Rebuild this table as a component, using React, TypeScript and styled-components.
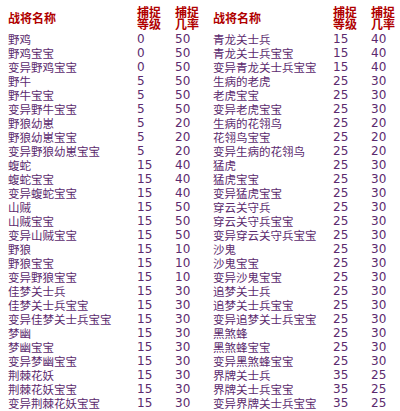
import styled, { createGlobalStyle } from "styled-components";

const GlobalStyle = createGlobalStyle`
  html, body {
    margin: 0;
    padding: 0;
    background: #ffffff;
  }
`;

type Row = [string, number, number];

const leftRows: Row[] = [
  ["野鸡", 0, 50],
  ["野鸡宝宝", 0, 50],
  ["变异野鸡宝宝", 0, 50],
  ["野牛", 5, 50],
  ["野牛宝宝", 5, 50],
  ["变异野牛宝宝", 5, 50],
  ["野狼幼崽", 5, 20],
  ["野狼幼崽宝宝", 5, 20],
  ["变异野狼幼崽宝宝", 5, 20],
  ["蝮蛇", 15, 40],
  ["蝮蛇宝宝", 15, 40],
  ["变异蝮蛇宝宝", 15, 40],
  ["山贼", 15, 50],
  ["山贼宝宝", 15, 50],
  ["变异山贼宝宝", 15, 50],
  ["野狼", 15, 10],
  ["野狼宝宝", 15, 10],
  ["变异野狼宝宝", 15, 10],
  ["佳梦关士兵", 15, 30],
  ["佳梦关士兵宝宝", 15, 30],
  ["变异佳梦关士兵宝宝", 15, 30],
  ["梦幽", 15, 30],
  ["梦幽宝宝", 15, 30],
  ["变异梦幽宝宝", 15, 30],
  ["荆棘花妖", 15, 30],
  ["荆棘花妖宝宝", 15, 30],
  ["变异荆棘花妖宝宝", 15, 30],
];

const rightRows: Row[] = [
  ["青龙关士兵", 15, 40],
  ["青龙关士兵宝宝", 15, 40],
  ["变异青龙关士兵宝宝", 15, 40],
  ["生病的老虎", 25, 30],
  ["老虎宝宝", 25, 30],
  ["变异老虎宝宝", 25, 30],
  ["生病的花翎鸟", 25, 20],
  ["花翎鸟宝宝", 25, 20],
  ["变异生病的花翎鸟", 25, 20],
  ["猛虎", 25, 30],
  ["猛虎宝宝", 25, 30],
  ["变异猛虎宝宝", 25, 30],
  ["穿云关守兵", 25, 30],
  ["穿云关守兵宝宝", 25, 30],
  ["变异穿云关守兵宝宝", 25, 30],
  ["沙鬼", 25, 30],
  ["沙鬼宝宝", 25, 30],
  ["变异沙鬼宝宝", 25, 30],
  ["追梦关士兵", 25, 30],
  ["追梦关士兵宝宝", 25, 30],
  ["变异追梦关士兵宝宝", 25, 30],
  ["黑煞蜂", 25, 30],
  ["黑煞蜂宝宝", 25, 30],
  ["变异黑煞蜂宝宝", 25, 30],
  ["界牌关士兵", 35, 25],
  ["界牌关士兵宝宝", 35, 25],
  ["变异界牌关士兵宝宝", 35, 25],
];

const Page = styled.div`
  display: flex;
  width: 400px;
  height: 411px;
  overflow: hidden;
  background: #ffffff;
`;

const Table = styled.div<{ $inset: number }>`
  width: 200px;
  padding-left: ${(p) => p.$inset}px;
  box-sizing: border-box;
  display: flex;
  flex-direction: column;
`;

const Line = styled.div<{ $nameWidth: number }>`
  display: grid;
  grid-template-columns: ${(p) => p.$nameWidth}px 38px 1fr;
  align-items: center;
`;

const HeadLine = styled(Line)`
  height: 32px;
  padding-top: 3px;
  box-sizing: border-box;
  color: #b00000;
  font-family: "Noto Sans CJK SC", "Noto Sans", sans-serif;
  font-weight: 700;
  font-size: 12px;
  line-height: 12px;
`;

const HeadCell = styled.div`
  white-space: pre-line;
`;

const BodyLine = styled(Line)`
  height: 14px;
  color: #5b2a6e;
`;

const NameCell = styled.div`
  font-family: "Noto Sans CJK SC", "Noto Sans", sans-serif;
  font-size: 11.5px;
  line-height: 14px;
  white-space: nowrap;
`;

const NumCell = styled.div`
  font-family: "DejaVu Sans", "Liberation Sans", sans-serif;
  font-size: 12px;
  line-height: 14px;
`;

const CatchTable = ({
  rows,
  inset,
  nameWidth,
}: {
  rows: Row[];
  inset: number;
  nameWidth: number;
}) => (
  <Table $inset={inset}>
    <HeadLine $nameWidth={nameWidth}>
      <HeadCell>战将名称</HeadCell>
      <HeadCell>{"捕捉\n等级"}</HeadCell>
      <HeadCell>{"捕捉\n几率"}</HeadCell>
    </HeadLine>
    {rows.map(([name, level, rate]) => (
      <BodyLine key={name} $nameWidth={nameWidth}>
        <NameCell>{name}</NameCell>
        <NumCell>{level}</NumCell>
        <NumCell>{rate}</NumCell>
      </BodyLine>
    ))}
  </Table>
);

const App = () => (
  <>
    <GlobalStyle />
    <Page>
      <CatchTable rows={leftRows} inset={8} nameWidth={129} />
      <CatchTable rows={rightRows} inset={13} nameWidth={120} />
    </Page>
  </>
);

export default App;
